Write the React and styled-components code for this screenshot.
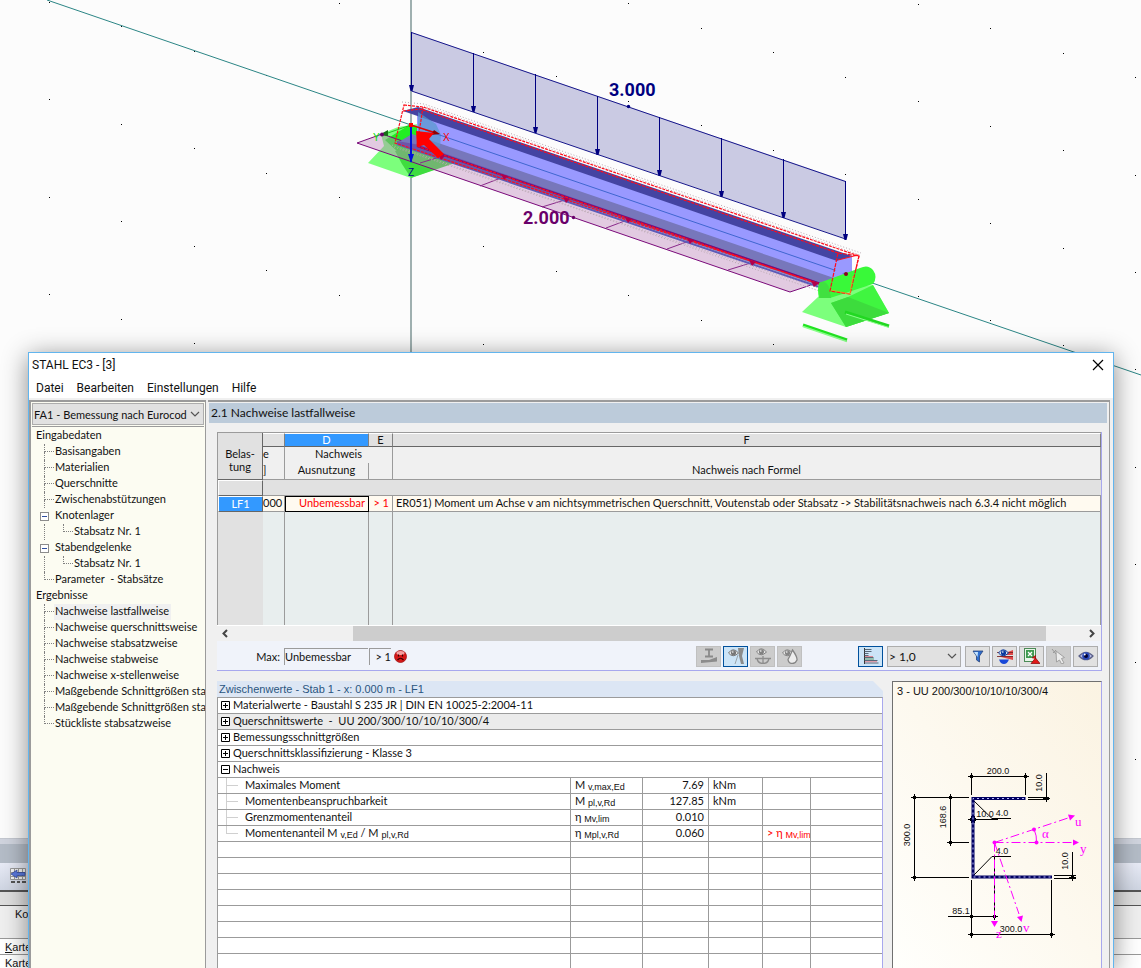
import React from "react";
import styled, { createGlobalStyle, css } from "styled-components";

const GlobalStyle = createGlobalStyle`
  * {
    box-sizing: border-box;
  }
  body {
    margin: 0;
    background: #fcfcfc;
    color: #111;
    font-family: Lato, "Liberation Sans", sans-serif;
    font-size: 11px;
  }
  button, input, select {
    font: inherit;
    color: inherit;
  }
`;

// Data
const tree = [
  { label: "Eingabedaten", level: 0 },
  { label: "Basisangaben", level: 1 },
  { label: "Materialien", level: 1 },
  { label: "Querschnitte", level: 1 },
  { label: "Zwischenabstützungen", level: 1 },
  { label: "Knotenlager", level: 1, open: true },
  { label: "Stabsatz Nr. 1", level: 2, last: true },
  { label: "Stabendgelenke", level: 1, open: true },
  { label: "Stabsatz Nr. 1", level: 2, last: true },
  { label: "Parameter  - Stabsätze", level: 1, last: true },
  { label: "Ergebnisse", level: 0 },
  { label: "Nachweise lastfallweise", level: 1, active: true },
  { label: "Nachweise querschnittsweise", level: 1 },
  { label: "Nachweise stabsatzweise", level: 1 },
  { label: "Nachweise stabweise", level: 1 },
  { label: "Nachweise x-stellenweise", level: 1 },
  { label: "Maßgebende Schnittgrößen sta", level: 1 },
  { label: "Maßgebende Schnittgrößen sta", level: 1 },
  { label: "Stückliste stabsatzweise", level: 1, last: true },
];

const groups = [
  { label: "Materialwerte - Baustahl S 235 JR | DIN EN 10025-2:2004-11" },
  { label: "Querschnittswerte  -  UU 200/300/10/10/10/300/4", shaded: true },
  { label: "Bemessungsschnittgrößen" },
  { label: "Querschnittsklassifizierung - Klasse 3" },
  { label: "Nachweis", open: true },
];

const values = [
  { label: "Maximales Moment", symbol: "M", index: "v,max,Ed", value: "7.69", unit: "kNm" },
  { label: "Momentenbeanspruchbarkeit", symbol: "M", index: "pl,v,Rd", value: "127.85", unit: "kNm" },
  { label: "Grenzmomentenanteil", symbol: "η", index: "Mv,lim", value: "0.010", unit: "" },
  {
    label: (
      <>
        Momentenanteil M <sub>v,Ed</sub> / M <sub>pl,v,Rd</sub>
      </>
    ),
    symbol: "η",
    index: "Mpl,v,Rd",
    value: "0.060",
    unit: "",
    limit: true,
    last: true,
  },
];

// Grid dots of the work plane
const dots = [];
for (let i = -5; i <= 10; i++) {
  for (let j = -12; j <= 10; j++) {
    const x = Math.round(411 + 72.4 * i);
    const y = Math.round(27 + 24.5 * i + 97.4 * j);
    if (y > 0 && y < 830) dots.push([x, y]);
  }
}

const loadArrows = [411, 473, 535, 597, 659, 721, 783, 845];
const sideTicks = [
  [420, 163, 443, 156],
  [480, 186, 506, 176],
  [542, 207, 568, 199],
  [606, 228, 630, 219],
  [667, 249, 692, 240],
  [728, 270, 754, 262],
];

const Model = () => (
  <Scene viewBox="0 0 1141 838" preserveAspectRatio="xMinYMin slice" role="img" aria-label="Modell">
    {dots.map(([x, y]) => (
      <rect key={`${x}-${y}`} x={x} y={y} width="1" height="1" fill="#000" />
    ))}
    <path d="M411 0V838" stroke="#9fb0b0" strokeWidth="2" />
    <path d="M47 0L411 125L846 274L1141 375" stroke="#2b8585" strokeWidth="1" fill="none" />
    {/* left support */}
    <path d="M368 163L384 146L381 134L398 127L432 122L441 135L455 162L411 178Z" fill="#7cff7c" />
    <path d="M385 140L411 124L420 128L418 150L398 152Z" fill="#22ee22" />
    <path d="M395 151L411 147L447 150L455 163L411 178L402 164Z" fill="#3fdc3f" />
    <path d="M418 126Q440 110 441 135L455 160L430 152Z" fill="#5fc8a0" />
    {/* lateral load */}
    <path d="M357 143L382 134L817 283L790 292Z" fill="#bb80b8" fillOpacity="0.4" stroke="#7a0a7a" strokeWidth="1" />
    {sideTicks.map(([x1, y1, x2, y2]) => (
      <path key={x1} d={`M${x1} ${y1}L${x2} ${y2}`} stroke="#8a2a8a" />
    ))}
    {/* beam */}
    <path d="M417 109L852 257L852 291L395 143L417 139Z" fill="#9999ff" />
    <path d="M412 134L834 278L826 288L397 143Z" fill="#7777bb" />
    <path d="M397 141L420 145L832 287L848 293L838 290L397 144Z" fill="#6d55a8" />
    <path d="M403 111L418 107L852 256L837 261Z" fill="#4444a2" />
    <path d="M418 112L418 140L440 147L441 135L436 124Z" fill="#5599cc" fillOpacity="0.7" />
    <path d="M425 130L846 274" stroke="#3f66d0" strokeWidth="1" />
    <g fill="none" stroke="#b8a8b0" strokeDasharray="1 2">
      <path d="M402 102L424 104L861 253" />
      <path d="M424 106L860 255" />
      <path d="M392 145L600 216L846 297" />
      <path d="M394 147L846 300" />
    </g>
    <path d="M417 146L830 287" stroke="#7a0a7a" strokeWidth="2" />
    <path d="M397 144L846 296" stroke="#5c5cb8" strokeWidth="2" />
    <g fill="none" stroke="#ff0d1a" strokeWidth="1.2" strokeDasharray="3 1">
      <path d="M404 105L423 107L859 256L850 294L395 143Z" />
      <path d="M403 111L420 109L838 253" />
      <path d="M423 107L417 146L830 288" />
    </g>
    {sideTicks.map(([x1, y1, x2, y2]) => (
      <path key={x1} d={`M${x2 + 2} ${y2}l-7 -2l3 6z`} fill="#b0004c" />
    ))}
    {/* vertical line load */}
    <path d="M411 32L846 181L846 239L411 91Z" fill="#8080bf" fillOpacity="0.4" />
    <path d="M411.5 32.500L845.500 181.500V239L411.500 91" fill="none" stroke="#000080" strokeWidth="0.900" />
    {loadArrows.map((x) => {
      const top = Math.round(32 + (x - 411) * 0.3425);
      const tip = top + 59;
      return (
        <g key={x}>
          <path d={`M${x + 0.5} ${top}V${tip}`} stroke="#000080" strokeWidth="1" />
          <path d={`M${x - 2} ${tip - 6}h5l-1.500 6h-2z`} fill="#000080" />
        </g>
      );
    })}
    <circle cx="628.5" cy="106.5" r="1.7" fill="#000080" />
    <circle cx="573.5" cy="217.5" r="1.7" fill="#6a006a" />
    <LoadValue x="609" y="96" fill="#000080">
      3.000
    </LoadValue>
    <LoadValue x="523" y="224" fill="#6a006a">
      2.000
    </LoadValue>
    {/* right support */}
    <path d="M818 297L802 312L846 327L889 313L873 285L830 288Z" fill="#7cff7c" />
    <path d="M831 303L848 297L873 285L889 313L846 327Z" fill="#40f540" />
    <path d="M831 303L848 297L889 313L846 327Z" fill="#3ddc3d" />
    <path d="M819 283Q817 290 819 298L830 298L873 284Q878 277 873 270Q868 264 860 268Z" fill="#39f939" />
    <path d="M819 283Q825 279 829 287L831 298L820 298Z" fill="#40e040" />
    <path d="M803 325L847 340" stroke="#22e422" strokeWidth="3" />
    <path d="M803 326.500L847 341.500" stroke="#8cff8c" strokeWidth="1.500" />
    <path d="M845 312L889 326" stroke="#22d822" strokeWidth="3" />
    <path d="M846 314L889 327.500" stroke="#8cff8c" strokeWidth="1" />
    <path d="M819 283l-8 -2l3 6z" fill="#b0004c" />
    {/* end outline */}
    <path d="M838 260L852 256V268L846 272L834 276Z" fill="#9999ff" />
    <path d="M838 260L840 254L852 256Z" fill="#4444a2" />
    <path d="M838 253L859 256L850 294L830 291Z" fill="none" stroke="#ff0d1a" strokeWidth="1.200" strokeDasharray="4 1" />
    <path d="M831 290L850 294L853 276" fill="none" stroke="#ff9a20" strokeWidth="0.700" />
    <path d="M838 260L858 255" stroke="#ff0d1a" />
    <circle cx="846" cy="274" r="2" fill="#8a0020" />
    {/* local axes */}
    <path d="M411 125V162" stroke="#0010d8" strokeWidth="2" />
    <path d="M408 154h6l-3 9z" fill="#0010d8" />
    <path d="M411 125L385 134" stroke="#20c020" />
    <path d="M379 135l9 -5v6z" fill="#187018" />
    <circle cx="382" cy="134.500" r="2" fill="#6a006a" />
    <path d="M411 125L436 133" stroke="#e00000" strokeWidth="1.500" />
    <path d="M440 134l-9 1l3 -5z" fill="#900000" />
    <rect x="409" y="123" width="4" height="4" fill="#ff0000" />
    <path d="M416 131L434 133L429 139L444 154L438 158L424 145L417 147Z" fill="#ff0000" />
    <AxisLabel x="443" y="141" fill="#ff0000">X</AxisLabel>
    <AxisLabel x="373" y="141" fill="#00e000">Y</AxisLabel>
    <AxisLabel x="408" y="176" fill="#000090">Z</AxisLabel>
  </Scene>
);

// Filled arrow ticks at the end of a dimension line
const Tick = ({ x, y }) => (
  <path d={`M${x - 3.5} ${y}H${x + 3.5}M${x} ${y - 3.5}V${y + 3.5}M${x - 2} ${y}l2 -2l2 2l-2 2z`} stroke="#000" fill="#000" />
);

const CrossSection = () => (
  <Drawing viewBox="893 700 208 268" preserveAspectRatio="xMidYMin meet" role="img" aria-label="Querschnitt">
    <g stroke="#000" fill="none">
      <path d="M971.500 776.500H1025.500M971.500 776.500V795M1025.500 776.500V795" />
      <path d="M1046.500 773V801M1028 797.500H1049M1028 799.500H1049" />
      <path d="M914.500 797.500V877.500M914.500 797.500H969M914.500 877.500H969" />
      <path d="M950.500 797.500V842.500H969" />
      <path d="M968 819.500H998M974 801L992 818.500H1011" />
      <path d="M974 875L992 856.500H1011" />
      <path d="M948 916.500H998M971.500 880V937M994.500 857V916.500" />
      <path d="M971.500 934.500H1051.500V880" />
      <path d="M1072.500 852V881M1054 875.500H1076M1054 878.500H1076" />
    </g>
    {[
      [971.5, 776.5], [1025.5, 776.5], [1046.5, 798.5], [914.5, 797.5], [914.5, 877.5], [950.5, 797.5], [950.5, 842.5],
      [971.5, 819.5], [974.5, 819.5], [971.5, 916.5], [994.5, 916.5], [971.5, 934.5], [1051.5, 934.5], [1072.5, 877.5],
    ].map(([x, y]) => (
      <Tick key={`${x}-${y}`} x={x} y={y} />
    ))}
    <path d="M1025.500 798.500H973V877H1052" stroke="#000060" strokeWidth="3" fill="none" />
    <path d="M1024 798.500H973V877H1051" stroke="#b8b8ff" strokeWidth="1" strokeDasharray="2 3" fill="none" />
    <g stroke="#ff00ff" fill="none">
      <path d="M994.500 842.500L1068 818M994.500 842.500H1072M994.500 842.500V918M994.500 842.500L1019 914" strokeDasharray="9 3 2 3" />
      <path d="M1034 829Q1037 836 1036.500 842.500" />
    </g>
    <g fill="#ff00ff">
      <circle cx="994.500" cy="842.500" r="2" />
      <circle cx="1034" cy="829.500" r="2" />
      <circle cx="1036.500" cy="842.500" r="2" />
      <path d="M1075 815.500l-7 -1l2 6z" />
      <path d="M1079 842.500l-6 -3v6z" />
      <path d="M994.500 927l-3.500 -6h7z" />
      <path d="M1021.500 922l-4.500 -5l6 -1.500z" />
      <AxisName x="1075" y="826">u</AxisName>
      <AxisName x="1080" y="853">y</AxisName>
      <AxisName x="1023" y="932">v</AxisName>
      <AxisName x="996" y="938">z</AxisName>
      <AxisName x="1042" y="838">α</AxisName>
    </g>
    <Dimensions>
      <text x="998" y="774">200.0</text>
      <text x="985" y="817">10.0</text>
      <text x="1002" y="816">4.0</text>
      <text x="1002" y="854">4.0</text>
      <text x="961" y="914">85.1</text>
      <text x="1011" y="932">300.0</text>
      <text transform="translate(1042 783) rotate(-90)">10.0</text>
      <text transform="translate(1068 861) rotate(-90)">10.0</text>
      <text transform="translate(910 835) rotate(-90)">300.0</text>
      <text transform="translate(946 817) rotate(-90)">168.6</text>
    </Dimensions>
  </Drawing>
);

const Chevron = () => (
  <svg width="10" height="6" viewBox="0 0 10 6" fill="none" stroke="#555" strokeWidth="1.200">
    <path d="M1 1l4 4l4 -4" />
  </svg>
);

const SadFace = () => (
  <svg width="13" height="13" viewBox="0 0 13 13">
    <circle cx="6.500" cy="6.500" r="6" fill="#d81818" stroke="#a01818" strokeWidth="0.800" />
    <ellipse cx="6.500" cy="3" rx="4" ry="2" fill="#f4a0a0" />
    <path d="M4.500 4.500v2M8.500 4.500v2M3.500 10q3 -3.500 6 0" stroke="#300" strokeWidth="1.200" fill="none" />
  </svg>
);

const Eye = ({ color = "#7d7d7d", x = 0, y = 0 }) => (
  <g transform={`translate(${x} ${y})`}>
    <path d="M0.500 4Q5 -2.500 10.500 4Q5 9.500 0.500 4Z" fill="#e8e8e8" stroke={color} />
    <circle cx="5.500" cy="3.800" r="2.600" fill={color} />
    <circle cx="4.800" cy="3" r="0.800" fill="#fff" />
  </g>
);

const icons = {
  section: (
    <>
      <path d="M4 1.500h8M4 8.500h8M8 1.500v7" stroke="#8a8a8a" strokeWidth="1.800" />
      <path d="M0 15V12L8 12L16 9V13.500Z" fill="#8c8c8c" />
    </>
  ),
  eyeBeam: (
    <>
      <Eye y={1} color="#777" />
      <path d="M10 0h6L14 8L16 16H13L11 8Z" fill="#8b8b8b" />
      <path d="M10 7L7 16" stroke="#9aa4ac" />
    </>
  ),
  eyeCurve: (
    <>
      <Eye x={1} color="#808080" />
      <path d="M0 10.500h16M2 10.500q1 5 6 5q5 0 6 -5M8 8v7" stroke="#8d8d8d" strokeWidth="1.300" fill="none" />
    </>
  ),
  eyeDrop: (
    <>
      <Eye y={1} color="#858585" />
      <path d="M10.500 2Q15.500 9 15 12Q13.500 15.500 10.500 15.500Q6.500 15.500 6 11.500Q8 8 10.500 2Z" fill="#ededed" stroke="#858585" strokeWidth="1.300" />
    </>
  ),
  bars: (
    <>
      <path d="M1.500 0V16" stroke="#333" />
      <path d="M1.500 1.500h7M1.500 3.500h7M1.500 5.500h4M1.500 7.500h4M1.500 9.500h9M1.500 12.500h13M1.500 15h14" stroke="#4c5a6a" strokeWidth="0.900" />
      <path d="M2 8.500h8M2 13.700h12" stroke="#e08c98" />
      <path d="M2 11h9" stroke="#5a9a6a" />
    </>
  ),
  filter: (
    <>
      <path d="M3 3h10L9.500 8v6l-3 -2V8Z" fill="#2f6fd0" stroke="#2a4478" strokeWidth="0.800" />
      <path d="M4 4h4l-0.500 5z" fill="#c4e4ff" />
    </>
  ),
  eyeResults: (
    <>
      <path d="M8 5L16 2V7H8ZM0 8H16V12L8 10Z" fill="#e04848" />
      <path d="M0 4.500h16M0 8.500h16" stroke="#702020" strokeWidth="0.800" />
      <Eye y={1} x={1} color="#0a3aa0" />
      <path d="M2 11.500h10q-2 4.500 -5 4.500q-3.500 0 -5 -4.500z" fill="#1848d8" />
    </>
  ),
  excel: (
    <>
      <rect x="0.500" y="0.500" width="11" height="13" fill="#e8f4e8" stroke="#4a8a56" />
      <rect x="2" y="2" width="8" height="8" fill="#3f9a50" />
      <path d="M4 4l4 4M8 4l-4 4" stroke="#fff" strokeWidth="1.300" />
      <path d="M8 10L11.500 7.500V11M7 15.500L11.500 10L16 15.500Z" fill="#e01818" stroke="#901010" strokeWidth="0.800" />
    </>
  ),
  cursor: (
    <>
      <path d="M1 1l4 5M2 5l3 -3" stroke="#999" />
      <path d="M5 3L13.500 9.500L10.500 10.500L13 15L10.500 16L8.500 12L5.500 14Z" fill="#ececec" stroke="#a0a0a0" />
    </>
  ),
  eye: (
    <>
      <path d="M1 8Q8 0.500 15 8Q8 15.500 1 8Z" fill="#b9bde6" stroke="#5a6088" strokeWidth="1.200" />
      <circle cx="8" cy="8" r="3.800" fill="#2a48b8" />
      <circle cx="8" cy="8" r="2" fill="#000030" />
      <circle cx="6.700" cy="6.500" r="1" fill="#fff" />
    </>
  ),
};

const Tool = ({ icon, label, active, disabled }) => (
  <ToolButton type="button" aria-label={label} $active={active} disabled={disabled}>
    <svg width="16" height="16" viewBox="0 0 16 16" fill="none">
      {icons[icon]}
    </svg>
  </ToolButton>
);

const TreeRow = ({ item }) => (
  <TreeItem>
    {item.level === 2 && <Guide />}
    {item.level > 0 && !item.open && <Branch $last={item.last} />}
    {item.open && (
      <TreeToggle type="button" aria-label="Zuklappen">
        <svg width="7" height="7" viewBox="0 0 7 7" stroke="#2f4f9f">
          <path d="M1 3.500h5" />
        </svg>
      </TreeToggle>
    )}
    <TreeLink href="#" $active={item.active}>
      {item.label}
    </TreeLink>
  </TreeItem>
);

const App = () => {
  return (
    <Page>
      <GlobalStyle />
      <Model />
      <Dock>
        <DockTitle />
        <DockBar>
          <svg width="17" height="16" viewBox="0 0 17 16">
            <path d="M0.500 0.500h15v11h-15zM0 4.500h16M0 8.500h16M4.500 1v11M8.500 1v11M12.500 1v11" stroke="#999" fill="#f4f4f4" />
            <path d="M1 14h4M7 14h3M12 14h4" stroke="#555" strokeWidth="2" />
            <path d="M1 6l6 -4v2.500h8v3H7V10z" fill="#5a78dc" stroke="#2c4498" strokeWidth="0.700" />
          </svg>
        </DockBar>
        <DockTable>
          <thead>
            <tr>
              <DockLetter />
            </tr>
            <tr>
              <DockHead>Ko</DockHead>
            </tr>
          </thead>
          <tbody>
            <tr>
              <td>
                <u>K</u>arte
              </td>
            </tr>
            <tr>
              <td>Karte</td>
            </tr>
          </tbody>
        </DockTable>
      </Dock>

      <Dialog>
        <TitleBar>
          <Title>STAHL EC3 - [3]</Title>
          <Close type="button" aria-label="Schließen">
            <svg width="12" height="12" viewBox="0 0 12 12" stroke="#000" strokeWidth="1.200">
              <path d="M1 1l10 10M11 1L1 11" />
            </svg>
          </Close>
        </TitleBar>
        <Menu>
          <MenuLink href="#">Datei</MenuLink>
          <MenuLink href="#">Bearbeiten</MenuLink>
          <MenuLink href="#">Einstellungen</MenuLink>
          <MenuLink href="#">Hilfe</MenuLink>
        </Menu>
        <Body>
          <Sidebar>
            <Combo $height="22px">
              <select aria-label="Bemessungsfall">
                <option>FA1 - Bemessung nach Eurocod</option>
              </select>
              <Chevron />
            </Combo>
            <Tree>
              {tree.map((item, i) => (
                <TreeRow key={i} item={item} />
              ))}
            </Tree>
          </Sidebar>

          <Main>
            <Heading>2.1 Nachweise lastfallweise</Heading>
            <Results>
              <GridTable>
                <colgroup>
                  <col style={{ width: 45 }} />
                  <col style={{ width: 22 }} />
                  <col style={{ width: 84 }} />
                  <col style={{ width: 24 }} />
                  <col />
                </colgroup>
                <thead>
                  <tr>
                    <RowHead rowSpan="3">
                      Belas-
                      <br />
                      tung
                    </RowHead>
                    <Letter />
                    <Letter $selected>D</Letter>
                    <Letter>E</Letter>
                    <Letter>F</Letter>
                  </tr>
                  <tr>
                    <HeadCell $align="left">e</HeadCell>
                    <HeadCell colSpan="2">Nachweis</HeadCell>
                    <HeadCell />
                  </tr>
                  <tr>
                    <HeadCell $align="left" $bottom>
                      ]
                    </HeadCell>
                    <HeadCell $bottom>Ausnutzung</HeadCell>
                    <HeadCell $bottom />
                    <HeadCell $bottom>Nachweis nach Formel</HeadCell>
                  </tr>
                </thead>
                <tbody>
                  <tr>
                    <RowLabel as="td" />
                    <GroupCell colSpan="4" />
                  </tr>
                  <tr>
                    <RowLabel $selected>LF1</RowLabel>
                    <Cell>000</Cell>
                    <Cell $error $focus>
                      Unbemessbar
                    </Cell>
                    <Cell $error>&gt; 1</Cell>
                    <Cell $left>
                      ER051) Moment um Achse v am nichtsymmetrischen Querschnitt, Voutenstab oder Stabsatz -&gt;
                      Stabilitätsnachweis nach 6.3.4 nicht möglich
                    </Cell>
                  </tr>
                  <FillRow>
                    <td />
                    <td />
                    <td />
                    <td />
                    <td />
                  </FillRow>
                </tbody>
              </GridTable>
              <ScrollBar>
                <svg width="16" height="15" viewBox="0 0 16 15" fill="none" stroke="#444" strokeWidth="2">
                  <path d="M10 4L6.500 7.500L10 11" />
                </svg>
                <Track>
                  <Thumb />
                </Track>
                <svg width="16" height="15" viewBox="0 0 16 15" fill="none" stroke="#444" strokeWidth="2">
                  <path d="M5 4l3.500 3.500L5 11" />
                </svg>
              </ScrollBar>
              <ResultBar>
                <MaxLabel htmlFor="max">Max:</MaxLabel>
                <MaxInput id="max" $width="84px" readOnly value="Unbemessbar" />
                <MaxInput aria-label="Ausnutzung" $width="22px" $right readOnly value="> 1" />
                <SadFace />
                <Tools>
                  <Tool icon="section" label="Querschnitt" disabled />
                  <Tool icon="eyeBeam" label="Stab" active />
                  <Tool icon="eyeCurve" label="Verlauf" disabled />
                  <Tool icon="eyeDrop" label="Farbe" disabled />
                </Tools>
                <Tool icon="bars" label="Relationsbalken" active />
                <Combo $height="21px" $width="74px">
                  <select aria-label="Grenze">
                    <option>&gt; 1,0</option>
                  </select>
                  <Chevron />
                </Combo>
                <ToolGroup>
                  <Tool icon="filter" label="Filter" />
                  <Tool icon="eyeResults" label="Ergebnisse" />
                  <Tool icon="excel" label="Export" />
                  <Tool icon="cursor" label="Auswahl" disabled />
                  <Tool icon="eye" label="Ansicht" />
                </ToolGroup>
              </ResultBar>
            </Results>

            <Lower>
              <Details>
                <DetailsTitle>Zwischenwerte - Stab 1 - x: 0.000 m - LF1</DetailsTitle>
                <DetailsTable>
                  <colgroup>
                    <col />
                    <col style={{ width: 72 }} />
                    <col style={{ width: 66 }} />
                    <col style={{ width: 54 }} />
                    <col style={{ width: 48 }} />
                    <col style={{ width: 72 }} />
                  </colgroup>
                  <tbody>
                    {groups.map((group) => (
                      <DetailRow key={group.label} $shaded={group.shaded}>
                        <td colSpan="6">
                          <GroupLabel>
                            <Expander type="button" aria-label={group.label}>
                              <svg width="9" height="9" viewBox="0 0 9 9" fill="none" stroke="#000">
                                <path d={group.open ? "M0.500 0.500h8v8h-8zM2 4.500h5" : "M0.500 0.500h8v8h-8zM2 4.500h5M4.500 2v5"} />
                              </svg>
                            </Expander>
                            {group.label}
                          </GroupLabel>
                        </td>
                      </DetailRow>
                    ))}
                    {values.map((row) => (
                      <DetailRow key={row.index}>
                        <td>
                          <ValueLabel>
                            <Branch $solid $last={row.last} />
                            <span>{row.label}</span>
                          </ValueLabel>
                        </td>
                        <DataCell>
                          {row.symbol} <sub>{row.index}</sub>
                        </DataCell>
                        <DataCell $right>{row.value}</DataCell>
                        <DataCell>{row.unit}</DataCell>
                        <DataCell $error>
                          {row.limit && (
                            <>
                              &gt; η <sub>Mv,lim</sub>
                            </>
                          )}
                        </DataCell>
                        <DataCell />
                      </DetailRow>
                    ))}
                    {Array.from({ length: 9 }, (_, i) => (
                      <DetailRow key={i}>
                        <td />
                        <DataCell />
                        <DataCell />
                        <DataCell />
                        <DataCell />
                        <DataCell />
                      </DetailRow>
                    ))}
                  </tbody>
                </DetailsTable>
              </Details>
              <SectionPanel>
                <SectionTitle>3 - UU 200/300/10/10/10/300/4</SectionTitle>
                <CrossSection />
              </SectionPanel>
            </Lower>
          </Main>
        </Body>
      </Dialog>
    </Page>
  );
};

const menuFont = css`
  font-family: Roboto, "Liberation Sans", sans-serif;
  font-size: 12px;
`;

const Page = styled.div`
  position: relative;
  display: flex;
  flex-direction: column;
  height: 100vh;
  overflow: hidden;
`;

const Scene = styled.svg`
  flex: 1;
  width: 100%;
  min-height: 0;
`;

const LoadValue = styled.text`
  font-family: Roboto, "Liberation Sans", sans-serif;
  font-size: 18px;
  font-weight: 700;
`;

const AxisLabel = styled.text`
  font-family: "Liberation Sans", sans-serif;
  font-size: 10px;
`;

const AxisName = styled.text`
  font-family: "Liberation Serif", serif;
  font-size: 13px;
`;

const Dimensions = styled.g`
  fill: #111;
  font-family: "Liberation Sans", sans-serif;
  font-size: 9px;
  text-anchor: middle;
`;

// Table window below the model
const Dock = styled.section`
  flex: none;
  height: 130px;
  overflow: hidden;
  border-top: 1px solid #c4c8d0;
  font-family: "Liberation Sans", sans-serif;
`;

const DockTitle = styled.div`
  height: 24px;
  border-top: 5px solid #d0d4de;
  background: #b4bcc7;
`;

const DockBar = styled.div`
  height: 29px;
  padding: 5px 10px;
  border-bottom: 2px solid #555;
  background: linear-gradient(#e8ebf6, #cfd5e2);
`;

const DockTable = styled.table`
  width: 100%;
  border-spacing: 0;
  background: #fff;
  td {
    height: 16px;
    padding: 0 5px;
    border-bottom: 1px solid #999;
  }
`;

const DockLetter = styled.th`
  height: 14px;
  padding: 0;
  border-bottom: 1px solid #555;
  background: #dedede;
`;

const DockHead = styled.th`
  height: 33px;
  padding: 0 15px 16px;
  border-bottom: 1px solid #999;
  background: #efefef;
  font-weight: 400;
  text-align: left;
`;

const Dialog = styled.main`
  position: absolute;
  top: 352px;
  right: 27px;
  bottom: 0;
  left: 28px;
  display: flex;
  flex-direction: column;
  overflow: hidden;
  border: 1px solid #62b5ee;
  border-bottom: 0;
  background: #f0f0f0;
  box-shadow: 0 4px 24px rgba(0, 0, 0, 0.45);
`;

const TitleBar = styled.header`
  display: flex;
  align-items: center;
  justify-content: space-between;
  height: 24px;
  padding: 0 9px 0 3px;
  background: #fff;
`;

const Title = styled.h1`
  ${menuFont}
  margin: 0;
  font-weight: 400;
`;

const Close = styled.button`
  display: flex;
  padding: 0;
  border: 0;
  background: none;
`;

const Menu = styled.nav`
  ${menuFont}
  display: flex;
  gap: 13px;
  height: 21px;
  margin-bottom: 2px;
  padding: 0 7px;
  background: #fff;
  line-height: 22px;
`;

const MenuLink = styled.a`
  color: #111;
  text-decoration: none;
`;

const Body = styled.div`
  display: flex;
  flex: 1;
  min-height: 0;
  padding-right: 3px;
`;

const Sidebar = styled.aside`
  flex: none;
  width: 177px;
  padding: 1px 1px 0;
  overflow: hidden;
  border: solid #9b9b9b;
  border-width: 2px 1px 0 2px;
  background: #fcfcf2;
`;

const Combo = styled.div`
  display: grid;
  align-items: center;
  width: ${(props) => props.$width || "auto"};
  height: ${(props) => props.$height};
  border: 1px solid #adadad;
  background: #e1e1e1;
  select {
    grid-area: 1 / 1;
    width: 100%;
    height: 100%;
    padding: 0 16px 0 1px;
    border: 0;
    background: none;
    appearance: none;
    outline: none;
  }
  svg {
    grid-area: 1 / 1;
    justify-self: end;
    margin-right: 3px;
    pointer-events: none;
  }
`;

const Tree = styled.ul`
  margin: 1px 0 0;
  padding: 1px 0 0 3px;
  border-top: 1px solid #9b9b9b;
  list-style: none;
`;

const TreeItem = styled.li`
  display: flex;
  height: 16px;
  line-height: 14px;
  white-space: pre;
`;

const Guide = styled.span`
  flex: none;
  width: 11px;
  margin-left: 9px;
  border-left: 1px dotted #808080;
`;

const Branch = styled.span`
  flex: none;
  display: grid;
  grid-template-rows: 8px 8px;
  width: ${(props) => (props.$solid ? "12px" : "10px")};
  margin-left: ${(props) => (props.$solid ? "8px" : "9px")};
  &::before,
  &::after {
    content: "";
    border-left: 1px ${(props) => (props.$solid ? "solid #d0d0d0" : "dotted #808080")};
  }
  &::before {
    border-bottom: 1px ${(props) => (props.$solid ? "solid #d0d0d0" : "dotted #808080")};
  }
  &::after {
    visibility: ${(props) => (props.$last ? "hidden" : "visible")};
  }
  ${Guide} + & {
    margin-left: 8px;
  }
`;

const TreeToggle = styled.button`
  flex: none;
  display: flex;
  width: 9px;
  height: 9px;
  margin: 4px 5px;
  padding: 0;
  border: 1px solid #8c8c8c;
  background: #fff;
`;

const TreeLink = styled.a`
  padding: 0 2px 0 1px;
  background: ${(props) => (props.$active ? "#f0f0f0" : "none")};
  color: #111;
  text-decoration: none;
`;

const Main = styled.section`
  display: flex;
  flex: 1;
  flex-direction: column;
  min-width: 0;
  margin-left: 2px;
  padding: 1px 2px 0 1px;
  border-top: 2px solid #9b9b9b;
  border-right: 1px solid #9b9b9b;
`;

const Heading = styled.h2`
  flex: none;
  margin: 0;
  padding-left: 2px;
  background: #bccbda;
  font-size: 12px;
  font-weight: 400;
  line-height: 20px;
`;

const Results = styled.div`
  flex: none;
  margin: 9px 5px 0 8px;
  border-right: 1px solid #a8a8ee;
  border-bottom: 1px solid #a8a8ee;
`;

const GridTable = styled.table`
  width: 100%;
  border: solid #9b9b9b;
  border-width: 1px 0 0 1px;
  border-spacing: 0;
  table-layout: fixed;
  td,
  th {
    overflow: hidden;
    font-weight: 400;
    white-space: nowrap;
  }
`;

const RowHead = styled.th`
  padding: 8px 0 0;
  border-right: 1px solid #666;
  border-bottom: 1px solid #666;
  background: #e1e1e1;
  line-height: 13px;
`;

const Letter = styled.th`
  height: 14px;
  padding: 0;
  border-top: 1px solid #fff;
  border-right: 1px solid #808080;
  border-bottom: 1px solid #666;
  background: ${(props) => (props.$selected ? "#3399ff" : "#e1e1e1")};
  color: ${(props) => (props.$selected ? "#fff" : "#111")};
  line-height: 12px;
`;

const HeadCell = styled.th`
  height: ${(props) => (props.$bottom ? "17px" : "16px")};
  padding: 0;
  border-right: 1px solid #9b9b9b;
  border-bottom: ${(props) => (props.$bottom ? "1px solid #9b9b9b" : "0")};
  background: #f0f0f0;
  line-height: 14px;
  text-align: ${(props) => props.$align || "center"};
  vertical-align: top;
`;

const RowLabel = styled.th`
  height: 16px;
  padding: 0;
  border: 1px solid #fff;
  border-right-color: #666;
  border-bottom-color: #666;
  background: ${(props) => (props.$selected ? "#3399ff" : "#e1e1e1")};
  color: #fff;
  line-height: 12px;
`;

const GroupCell = styled.td`
  border-bottom: 1px solid #9b9b9b;
  background: #e1e1e1;
`;

const Cell = styled.td`
  padding: ${(props) => (props.$left ? "0 3px" : "0 3px 0 0")};
  border-right: 1px solid #9b9b9b;
  border-bottom: 1px solid #9b9b9b;
  outline: ${(props) => (props.$focus ? "1px solid #000" : "none")};
  outline-offset: -1px;
  background: #fffaf0;
  color: ${(props) => (props.$error ? "#ff0000" : "#111")};
  line-height: 13px;
  text-align: ${(props) => (props.$left ? "left" : "right")};
  vertical-align: top;
`;

const FillRow = styled.tr`
  td {
    height: 113px;
    border-right: 1px solid #9b9b9b;
    background: #e8eeee;
  }
  td:first-child {
    border-right-color: #e1e1e1;
    background: #e1e1e1;
  }
`;

const ScrollBar = styled.div`
  display: flex;
  height: 16px;
  border-top: 1px solid #fff;
  background: #f0f0f0;
`;

const Track = styled.div`
  flex: 1;
  padding: 0 39px 0 120px;
`;

const Thumb = styled.div`
  height: 15px;
  background: #cdcdcd;
`;

const ResultBar = styled.div`
  display: flex;
  align-items: center;
  height: 29px;
  padding: 1px 3px 0 0;
  background: #f0f3fa;
`;

const MaxLabel = styled.label`
  width: 67px;
  padding-right: 4px;
  text-align: right;
`;

const MaxInput = styled.input`
  width: ${(props) => props.$width};
  height: 17px;
  margin-right: ${(props) => (props.$right ? "3px" : "1px")};
  padding: 0;
  border: solid #9b9b9b;
  border-width: 1px 0 0 1px;
  border-radius: 0;
  background: none;
  text-align: ${(props) => (props.$right ? "right" : "left")};
`;

const Tools = styled.div`
  display: flex;
  gap: 2px;
  margin: 0 56px 0 auto;
`;

const ToolGroup = styled.div`
  display: flex;
  gap: 2px;
`;

const ToolButton = styled.button`
  display: flex;
  align-items: center;
  justify-content: center;
  width: 25px;
  height: 21px;
  padding: 0;
  border: 1px solid ${(props) => (props.$active ? "#00509c" : props.disabled ? "#c0c0c0" : "#adadad")};
  background: ${(props) => (props.$active ? "#cce4f7" : props.disabled ? "#cccccc" : "#e1e1e1")};
  & + ${Combo} {
    margin: 0 4px;
    font-size: 12px;
  }
`;

const Lower = styled.div`
  display: flex;
  flex: 1;
  gap: 9px;
  min-height: 0;
  margin: 10px 5px 0 8px;
`;

const Details = styled.div`
  flex: 1;
  min-width: 0;
  overflow: hidden;
`;

const DetailsTitle = styled.h3`
  margin: 0;
  padding-left: 2px;
  clip-path: polygon(0 0, calc(100% - 10px) 0, 100% 10px, 100% 100%, 0 100%);
  background: #dce6f4;
  color: #2a5580;
  font-family: "Liberation Sans", sans-serif;
  font-size: 11px;
  font-weight: 400;
  line-height: 16px;
`;

const DetailsTable = styled.table`
  width: 100%;
  border: solid #9b9b9b;
  border-width: 1px 1px 0 1px;
  border-right-color: #a8a8ee;
  border-spacing: 0;
  table-layout: fixed;
  background: #fff;
  sub {
    font-family: "Liberation Sans", sans-serif;
    font-size: 9px;
    line-height: 1;
    vertical-align: -1px;
  }
`;

const DetailRow = styled.tr`
  background: ${(props) => (props.$shaded ? "#ebebeb" : "#fff")};
  td {
    height: 16px;
    padding: 0;
    overflow: hidden;
    border-bottom: 1px solid #9b9b9b;
    line-height: 13px;
    vertical-align: top;
    white-space: nowrap;
  }
`;

const DataCell = styled.td`
  color: ${(props) => (props.$error ? "#ff0000" : "#111")};
  text-align: ${(props) => (props.$right ? "right" : "left")};
  && {
    padding: 0 4px;
    border-left: 1px solid #9b9b9b;
  }
`;

const GroupLabel = styled.div`
  display: flex;
  align-items: flex-start;
  gap: 3px;
  height: 15px;
  padding-left: 3px;
  white-space: pre;
`;

const ValueLabel = styled.div`
  display: flex;
  gap: 7px;
  height: 15px;
`;

const Expander = styled.button`
  display: flex;
  margin-top: 3px;
  padding: 0;
  border: 0;
  background: #fff;
`;

const SectionPanel = styled.aside`
  display: flex;
  flex: none;
  flex-direction: column;
  width: 210px;
  border: solid #707070;
  border-width: 1px 1px 0 1px;
  border-right-color: #a8a8ee;
  background: linear-gradient(to top right, #fffffc, #fbf3e2);
`;

const SectionTitle = styled.h3`
  margin: 0;
  padding-left: 4px;
  font-family: "Liberation Sans", sans-serif;
  font-size: 11px;
  font-weight: 400;
  line-height: 18px;
`;

const Drawing = styled.svg`
  flex: none;
  width: 100%;
`;

export default App;
